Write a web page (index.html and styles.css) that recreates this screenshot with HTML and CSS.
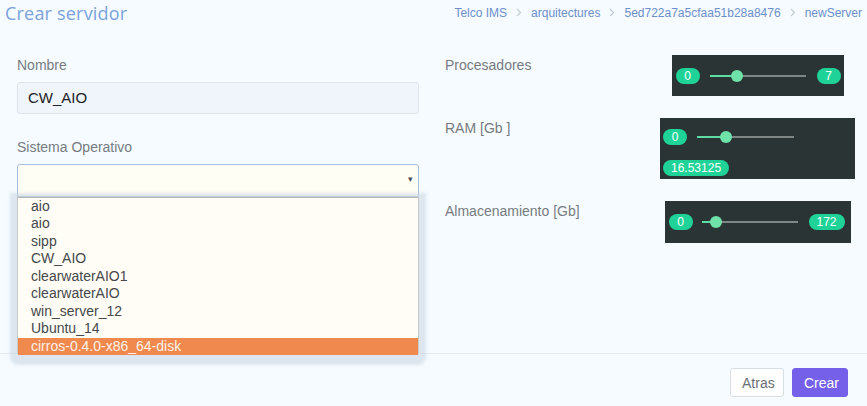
FILE: index.html
```html
<!DOCTYPE html>
<html lang="es">
<head>
<meta charset="utf-8">
<title>Crear servidor</title>
<link rel="stylesheet" href="styles.css">
</head>
<body>
<div class="page">
  <header class="header">
    <h1 class="title">Crear servidor</h1>
    <nav class="crumbs">
      <span class="crumb">Telco IMS</span>
      <svg class="sep" width="6" height="9" viewBox="0 0 6 9"><path d="M1 1l3.5 3.5L1 8" fill="none" stroke="#c3ccd6" stroke-width="1.1"/></svg>
      <span class="crumb">arquitectures</span>
      <svg class="sep" width="6" height="9" viewBox="0 0 6 9"><path d="M1 1l3.5 3.5L1 8" fill="none" stroke="#c3ccd6" stroke-width="1.1"/></svg>
      <span class="crumb">5ed722a7a5cfaa51b28a8476</span>
      <svg class="sep" width="6" height="9" viewBox="0 0 6 9"><path d="M1 1l3.5 3.5L1 8" fill="none" stroke="#c3ccd6" stroke-width="1.1"/></svg>
      <span class="crumb">newServer</span>
    </nav>
  </header>

  <main class="main">
    <section class="left">
      <label class="label">Nombre</label>
      <div class="input">CW_AIO</div>
      <label class="label label-gap">Sistema Operativo</label>
      <div class="select-wrap">
        <div class="select"><span class="arrow">▾</span></div>
        <ul class="menu">
          <li>aio</li>
          <li>aio</li>
          <li>sipp</li>
          <li>CW_AIO</li>
          <li>clearwaterAIO1</li>
          <li>clearwaterAIO</li>
          <li>win_server_12</li>
          <li>Ubuntu_14</li>
          <li class="active">cirros-0.4.0-x86_64-disk</li>
        </ul>
      </div>
    </section>

    <section class="right">
      <div class="row">
        <div class="rlabel">Procesadores</div>
        <div class="slot">
          <div class="slider s1">
            <span class="pill">0</span>
            <div class="track t1"><div class="fill" style="width:27px"></div><span class="thumb" style="left:27px"></span></div>
            <span class="pill">7</span>
          </div>
        </div>
      </div>
      <div class="row">
        <div class="rlabel">RAM [Gb ]</div>
        <div class="slot">
          <div class="slider s2">
            <div class="line">
              <span class="pill">0</span>
              <div class="track t2"><div class="fill" style="width:29px"></div><span class="thumb" style="left:29px"></span></div>
            </div>
            <div class="line line2">
              <span class="pill">16.53125</span>
            </div>
          </div>
        </div>
      </div>
      <div class="row">
        <div class="rlabel">Almacenamiento [Gb]</div>
        <div class="slot">
          <div class="slider s3">
            <span class="pill">0</span>
            <div class="track t3"><div class="fill" style="width:14px"></div><span class="thumb" style="left:14px"></span></div>
            <span class="pill">172</span>
          </div>
        </div>
      </div>
    </section>
  </main>

  <footer class="footer">
    <button class="btn btn-back">Atras</button>
    <button class="btn btn-create">Crear</button>
  </footer>
</div>
</body>
</html>
```

FILE: styles.css
```css
* { box-sizing: border-box; }
html, body { margin: 0; padding: 0; }
body {
  background: #f5fbff;
  font-family: "Liberation Sans", Arial, sans-serif;
  width: 867px;
  height: 406px;
  overflow: hidden;
}
.page { position: relative; }

.header {
  display: flex;
  justify-content: space-between;
  align-items: center;
  height: 25px;
  padding: 0 5px 0 5px;
}
.title {
  margin: 0;
  font-family: "Open Sans", sans-serif;
  font-weight: 400;
  font-size: 18px;
  color: #7ba2dc;
  letter-spacing: 0.2px;
}
.crumbs {
  display: flex;
  align-items: center;
  gap: 9px;
  font-size: 12px;
  color: #6d8fcb;
}
.sep { display: block; }

.main {
  display: flex;
  height: 328px;
  padding: 31px 0 0 17px;
}
.left {
  width: 402px;
  display: flex;
  flex-direction: column;
}
.label {
  font-size: 14px;
  line-height: 18px;
  color: #777b80;
  margin-bottom: 8px;
}
.label-gap { margin-top: 24px; }
.input {
  height: 32px;
  background: #eff5fa;
  border: 1px solid #dce5ec;
  border-radius: 3px;
  padding: 0 10px;
  font-size: 15px;
  line-height: 30px;
  color: #1e2226;
}
.select-wrap { position: relative; }
.select {
  height: 33px;
  background: #fffef4;
  border: 1px solid #a7bfdb;
  border-radius: 3px 3px 0 0;
  position: relative;
}
.arrow {
  position: absolute;
  right: 5px;
  top: 9px;
  font-size: 9px;
  color: #4a4f55;
}
.menu {
  position: absolute;
  left: 0;
  top: 33px;
  width: 402px;
  margin: 0;
  padding: 0;
  list-style: none;
  background: #fffdf5;
  border-left: 1px solid #c9c9c6;
  border-right: 1px solid #c9c9c6;
  border-top: 1px solid #b9b9b6;
  box-shadow: 0 3px 3px 7px rgba(200, 212, 224, 0.55);
  border-radius: 0 0 3px 3px;
  z-index: 5;
}
.menu li {
  height: 17.45px;
  line-height: 16px;
  padding-left: 13px;
  font-size: 14px;
  color: #45484c;
}
.menu li.active {
  background: #f0894e;
  color: #fdf1e8;
}

.right {
  flex: 1;
  margin-left: 26px;
  display: flex;
  flex-direction: column;
  margin-top: -1px;
  gap: 22px;
}
.row {
  display: flex;
  align-items: flex-start;
}
.rlabel {
  width: 203px;
  font-size: 14px;
  line-height: 18px;
  color: #777b80;
  margin-top: 1px;
}
.slot {
  flex: 1;
  display: flex;
  justify-content: center;
}
.slider {
  background: #2b3434;
  display: flex;
  align-items: center;
}
.s1 { width: 172px; height: 41px; padding: 0 3px 0 4px; }
.s2 { width: 195px; height: 61px; padding: 11px 3px 0 3px; flex-direction: column; align-items: flex-start; }
.s3 { width: 186px; height: 42px; padding: 0 4px 0 4px; }
.line { display: flex; align-items: center; }
.line2 { margin-top: 15px; }

.pill {
  display: inline-block;
  height: 16px;
  line-height: 16px;
  padding: 0 8px;
  border-radius: 8px;
  background: #1fd398;
  color: #ffffff;
  font-size: 12px;
  text-align: center;
  min-width: 24px;
}
.track {
  position: relative;
  height: 2px;
  background: #7f8786;
}
.fill {
  height: 2px;
  background: #5fdca3;
}
.thumb {
  position: absolute;
  top: -5px;
  width: 12px;
  height: 12px;
  margin-left: -6px;
  border-radius: 50%;
  background: #6fe2aa;
}
.t1 { width: 96px; margin: 0 11px 0 10px; }
.t2 { width: 97px; margin-left: 10px; }
.t3 { width: 96px; margin: 0 11px 0 9px; }

.footer {
  border-top: 1px solid #e2eaf0;
  display: flex;
  justify-content: flex-end;
  gap: 8px;
  padding: 14px 19px 0 0;
}
.btn {
  height: 29px;
  border-radius: 3px;
  font-family: "Liberation Sans", Arial, sans-serif;
  font-size: 14px;
  padding: 0 11px;
  cursor: pointer;
}
.btn-back {
  background: #ffffff;
  border: 1px solid #d8dde2;
  color: #6a6f75;
  width: 54px;
}
.btn-create {
  background: #7560ea;
  border: 1px solid #7560ea;
  color: #ffffff;
  width: 56px;
}
```
